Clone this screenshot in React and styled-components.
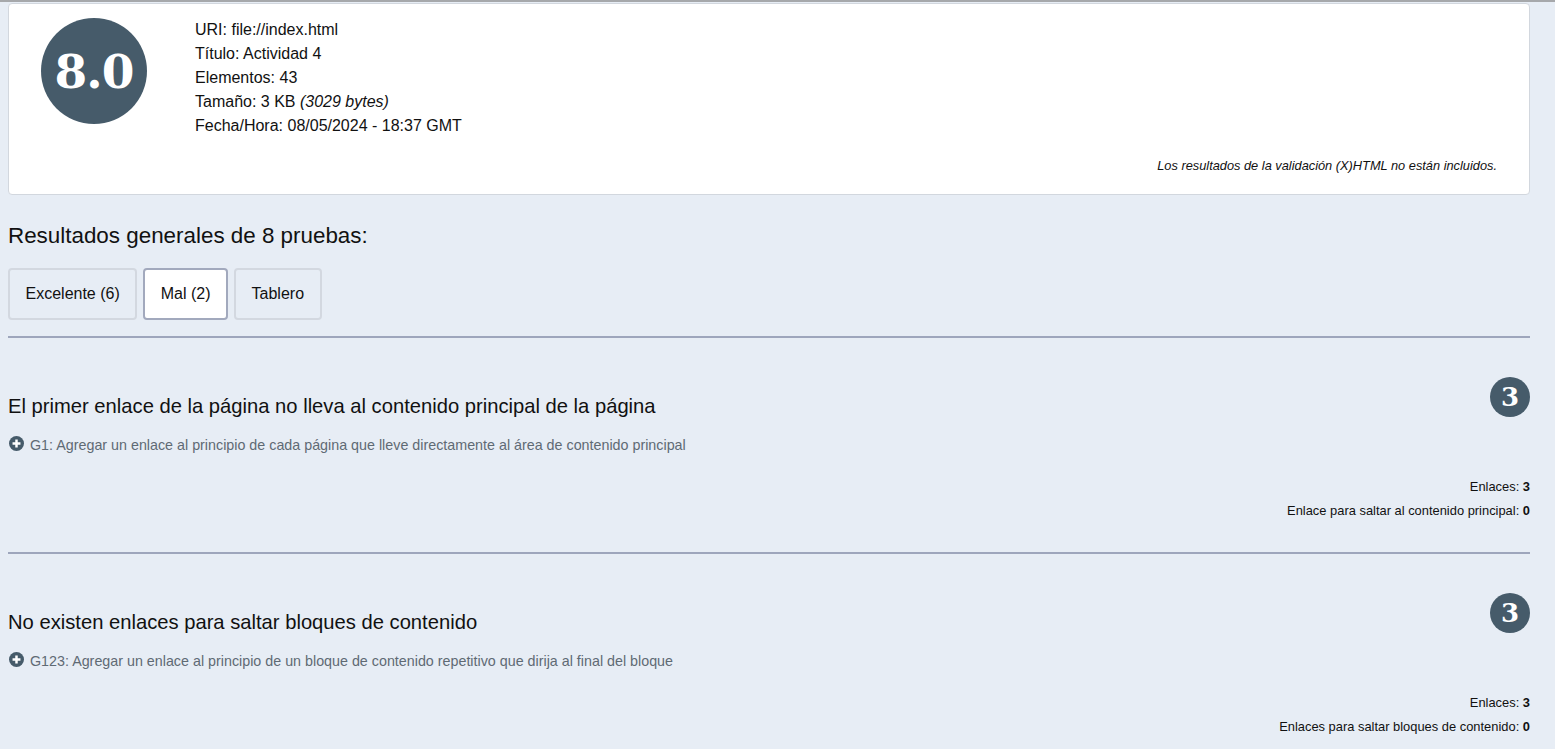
import React from 'react'
import styled, { createGlobalStyle } from 'styled-components'

const GlobalStyle = createGlobalStyle`
    html, body {
        margin: 0;
        padding: 0;
        background: #e7edf5;
    }
    body {
        border-top: 2px solid #a6a8ab;
        font-family: "Liberation Sans", Arial, sans-serif;
        color: #111;
    }
`

const tabs = [
    { label: 'Excelente (6)', active: false },
    { label: 'Mal (2)', active: true },
    { label: 'Tablero', active: false },
]

const results = [
    {
        title: 'El primer enlace de la página no lleva al contenido principal de la página',
        score: 3,
        technique: 'G1: Agregar un enlace al principio de cada página que lleve directamente al área de contenido principal',
        stats: [
            { label: 'Enlaces', value: 3 },
            { label: 'Enlace para saltar al contenido principal', value: 0 },
        ],
    },
    {
        title: 'No existen enlaces para saltar bloques de contenido',
        score: 3,
        technique: 'G123: Agregar un enlace al principio de un bloque de contenido repetitivo que dirija al final del bloque',
        stats: [
            { label: 'Enlaces', value: 3 },
            { label: 'Enlaces para saltar bloques de contenido', value: 0 },
        ],
    },
]

function PlusIcon() {
    return (
        <svg width="15" height="15" viewBox="0 0 14 14">
            <circle cx="7" cy="7" r="7" fill="#465b6a" />
            <path d="M7 3.3v7.4M3.3 7h7.4" stroke="#fff" strokeWidth="2.3" />
        </svg>
    )
}

function App() {
    return (
        <Page>
            <GlobalStyle />
            <SummaryCard>
                <SummaryRow>
                    <Score>8.0</Score>
                    <InfoList>
                        <li>URI: file://index.html</li>
                        <li>Título: Actividad 4</li>
                        <li>Elementos: 43</li>
                        <li>Tamaño: 3 KB <em>(3029 bytes)</em></li>
                        <li>Fecha/Hora: 08/05/2024 - 18:37 GMT</li>
                    </InfoList>
                </SummaryRow>
                <Note>Los resultados de la validación (X)HTML no están incluidos.</Note>
            </SummaryCard>

            <Heading>Resultados generales de 8 pruebas:</Heading>
            <Tabs>
                {tabs.map(t => (
                    <Tab key={t.label} active={t.active ? 1 : 0}>{t.label}</Tab>
                ))}
            </Tabs>

            {results.map(r => (
                <Result key={r.title}>
                    <ResultHeader>
                        <ResultTitle>{r.title}</ResultTitle>
                        <Badge>{r.score}</Badge>
                    </ResultHeader>
                    <Technique><PlusIcon />{r.technique}</Technique>
                    <Stats>
                        {r.stats.map(s => (
                            <li key={s.label}>{s.label}: <b>{s.value}</b></li>
                        ))}
                    </Stats>
                </Result>
            ))}
        </Page>
    )
}

const Page = styled.div`
    width: 1522px;
    margin: 1px 0 0 8px;
`

const SummaryCard = styled.div`
    background: #fff;
    border: 1px solid #d2d7de;
    border-radius: 4px;
    padding: 14px 32px 20px 32px;
`

const SummaryRow = styled.div`
    display: flex;
    align-items: flex-start;
    gap: 48px;
`

const Score = styled.div`
    width: 106px;
    height: 106px;
    border-radius: 50%;
    background: #465b6a;
    color: #fff;
    display: flex;
    align-items: center;
    justify-content: center;
    font-family: "DejaVu Serif", "Liberation Serif", serif;
    font-weight: bold;
    font-size: 47px;
    letter-spacing: -1px;
    flex-shrink: 0;
`

const InfoList = styled.ul`
    list-style: none;
    margin: 0;
    padding: 0;
    font-size: 16px;
    line-height: 24px;
`

const Note = styled.p`
    margin: 20px 0 0;
    font-size: 12.8px;
    line-height: 16px;
    font-style: italic;
    text-align: right;
`

const Heading = styled.h2`
    margin: 29px 0 0;
    font-size: 22.4px;
    font-weight: normal;
    line-height: 24px;
`

const Tabs = styled.div`
    display: flex;
    gap: 6px;
    margin-top: 20px;
    padding-bottom: 16px;
    border-bottom: 2px solid #9ea6bc;
`

const Tab = styled.button`
    height: 52px;
    padding: 0 15.5px;
    font-family: inherit;
    font-size: 16px;
    color: #111;
    border-radius: 4px;
    border: 2px solid ${props => props.active ? '#a2a9bd' : '#d3d8e0'};
    background: ${props => props.active ? '#fff' : '#e7edf5'};
    cursor: pointer;
`

const Result = styled.section`
    padding: 39px 0 29px;
    border-bottom: 2px solid #9ea6bc;
`

const ResultHeader = styled.div`
    display: flex;
    justify-content: space-between;
    align-items: flex-start;
`

const ResultTitle = styled.h3`
    margin: 17px 0 0;
    font-size: 20.2px;
    font-weight: normal;
    line-height: 24px;
`

const Badge = styled.div`
    width: 40px;
    height: 40px;
    border-radius: 50%;
    background: #465b6a;
    color: #fff;
    display: flex;
    align-items: center;
    justify-content: center;
    font-family: "DejaVu Serif", "Liberation Serif", serif;
    font-weight: bold;
    font-size: 26px;
`

const Technique = styled.p`
    display: flex;
    align-items: center;
    gap: 6px;
    margin: 17px 0 0 1px;
    font-size: 14.3px;
    line-height: 20px;
    color: #5f6a74;
    svg {
        flex-shrink: 0;
        transform: translateY(-2px);
    }
`

const Stats = styled.ul`
    list-style: none;
    margin: 20px 0 0;
    padding: 0;
    text-align: right;
    font-size: 12.9px;
    line-height: 24px;
`

export default App
